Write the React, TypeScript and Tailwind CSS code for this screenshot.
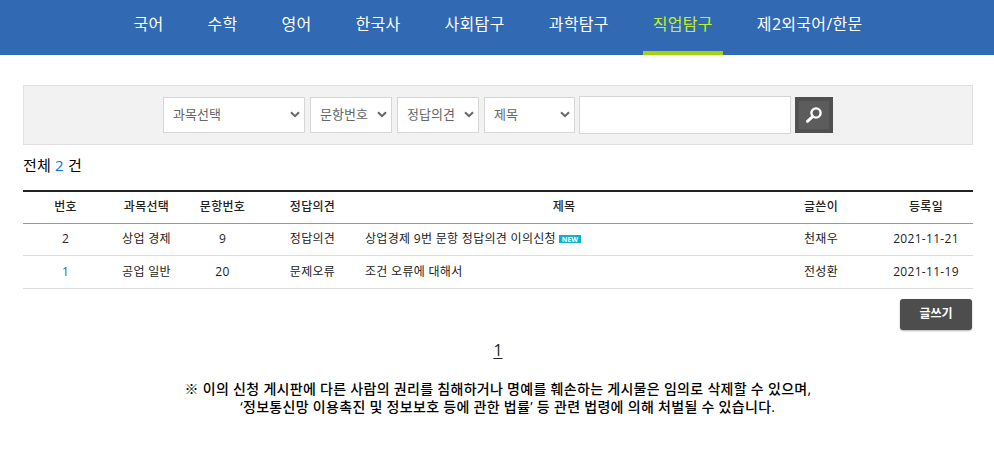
const KR_FONT = "font-['Open_Sans','Noto_Sans_CJK_KR',sans-serif]";

const NAV_ITEMS = ["국어", "수학", "영어", "한국사", "사회탐구", "과학탐구", "직업탐구", "제2외국어/한문"];

const ROWS = [
  { no: "2", subject: "상업 경제", question: "9", kind: "정답의견", title: "상업경제 9번 문항 정답의견 이의신청", isNew: true, author: "천재우", date: "2021-11-21", height: "h-[32px]" },
  { no: "1", subject: "공업 일반", question: "20", kind: "문제오류", title: "조건 오류에 대해서", isNew: false, author: "전성환", date: "2021-11-19", height: "h-[33px]" },
];

function FilterSelect({ label, width }: { label: string; width: string }) {
  return (
    <div className={`relative h-9 ${width}`}>
      <select className="h-full w-full appearance-none border border-[#d6d6d6] bg-white pl-[9px] text-[13px] text-[#666] outline-none">
        <option>{label}</option>
      </select>
      <svg viewBox="0 0 10 7" className="pointer-events-none absolute right-[5px] top-[14px] h-[7px] w-[10px]">
        <path d="M1 1.2 5 5.2 9 1.2" fill="none" stroke="#666" strokeWidth="2" />
      </svg>
    </div>
  );
}

function SearchIcon() {
  return (
    <svg viewBox="0 0 18 18" className="h-[18px] w-[18px]">
      <circle cx="11" cy="7" r="4.6" fill="none" stroke="#fff" strokeWidth="2.4" />
      <path d="M7.6 10.6 2.4 15.4" stroke="#fff" strokeWidth="2.8" strokeLinecap="round" />
    </svg>
  );
}

export default function App() {
  return (
    <div className={`min-h-[455px] bg-white text-[#222] ${KR_FONT}`}>
      <header className="h-[55px] bg-[#3169b3]">
        <nav className="flex h-full justify-center gap-6 pl-[2px]">
          {NAV_ITEMS.map((item) => {
            const isActive = item === "직업탐구";
            return (
              <a
                key={item}
                className={`flex h-full items-center border-b-4 px-2.5 pb-1 text-base tracking-[0.3px] ${
                  isActive ? "border-[#a8d110] text-[#c3f02b]" : "border-transparent text-white"
                }`}
              >
                {item}
              </a>
            );
          })}
        </nav>
      </header>

      <main className="pl-[23px] pr-[21px] pt-[30px]">
        <div className="flex h-[60px] items-center justify-center gap-[5px] border border-[#e0e0e0] bg-[#f2f2f2]">
          <FilterSelect label="과목선택" width="w-[142px]" />
          <FilterSelect label="문항번호" width="w-[82px]" />
          <FilterSelect label="정답의견" width="w-[82px]" />
          <FilterSelect label="제목" width="w-[91px]" />
          <input className="-ml-[1px] h-[38px] w-[212px] border border-[#d6d6d6] bg-white" />
          <button className="-ml-[1px] flex h-9 w-[38px] items-center justify-center bg-[#505050]">
            <span className="flex h-7 w-[30px] items-center justify-center bg-[#5c5c5c]">
              <SearchIcon />
            </span>
          </button>
        </div>

        <p className="mt-[10px] h-[35px] text-[15px] leading-5 tracking-[0.2px] text-black">
          전체 <span className="text-[#0f6fe0]">2</span> 건
        </p>

        <table className="w-full table-fixed border-t-2 border-[#222] text-xs tracking-[0.3px]">
          <colgroup>
            <col className="w-[85px]" />
            <col className="w-[77px]" />
            <col className="w-[75px]" />
            <col className="w-[105px]" />
            <col />
            <col className="w-[116px]" />
            <col className="w-[94px]" />
          </colgroup>
          <thead>
            <tr className="h-[32px] border-b border-[#999] font-medium">
              {["번호", "과목선택", "문항번호", "정답의견", "제목", "글쓴이", "등록일"].map((heading) => (
                <th key={heading} className="font-medium text-[#222]">
                  {heading}
                </th>
              ))}
            </tr>
          </thead>
          <tbody>
            {ROWS.map((row) => (
              <tr key={row.no} className={`${row.height} border-b border-[#ddd] text-center`}>
                <td className={row.no === "1" ? "text-[#1b66c0]" : ""}>{row.no}</td>
                <td>{row.subject}</td>
                <td>{row.question}</td>
                <td>{row.kind}</td>
                <td className="text-left">
                  <span className="inline-flex items-center gap-[3px]">
                    {row.title}
                    {row.isNew && (
                      <span className="flex h-2 w-[22px] items-center justify-center bg-[#0eb0cf] text-[7px] font-bold leading-none tracking-normal text-white">
                        NEW
                      </span>
                    )}
                  </span>
                </td>
                <td>{row.author}</td>
                <td>{row.date}</td>
              </tr>
            ))}
          </tbody>
        </table>

        <div className="mt-2.5 flex justify-end pr-[1px]">
          <button className="h-[31px] w-[72px] rounded-[3px] bg-[#4d4d4d] text-xs font-bold text-white shadow-[0_1px_2px_rgba(0,0,0,0.3)]">
            글쓰기
          </button>
        </div>

        <div className="mt-2.5 text-center text-base leading-5">
          <a className="underline underline-offset-2">1</a>
        </div>

        <p className="mt-5 text-center text-sm font-medium leading-[18px] tracking-[0.3px] text-black">
          ※ 이의 신청 게시판에 다른 사람의 권리를 침해하거나 명예를 훼손하는 게시물은 임의로 삭제할 수 있으며,
          <br />
          &nbsp;&nbsp;&nbsp;&nbsp;&nbsp;‘정보통신망 이용촉진 및 정보보호 등에 관한 법률’ 등 관련 법령에 의해 처벌될 수 있습니다.
        </p>
      </main>
    </div>
  );
}
